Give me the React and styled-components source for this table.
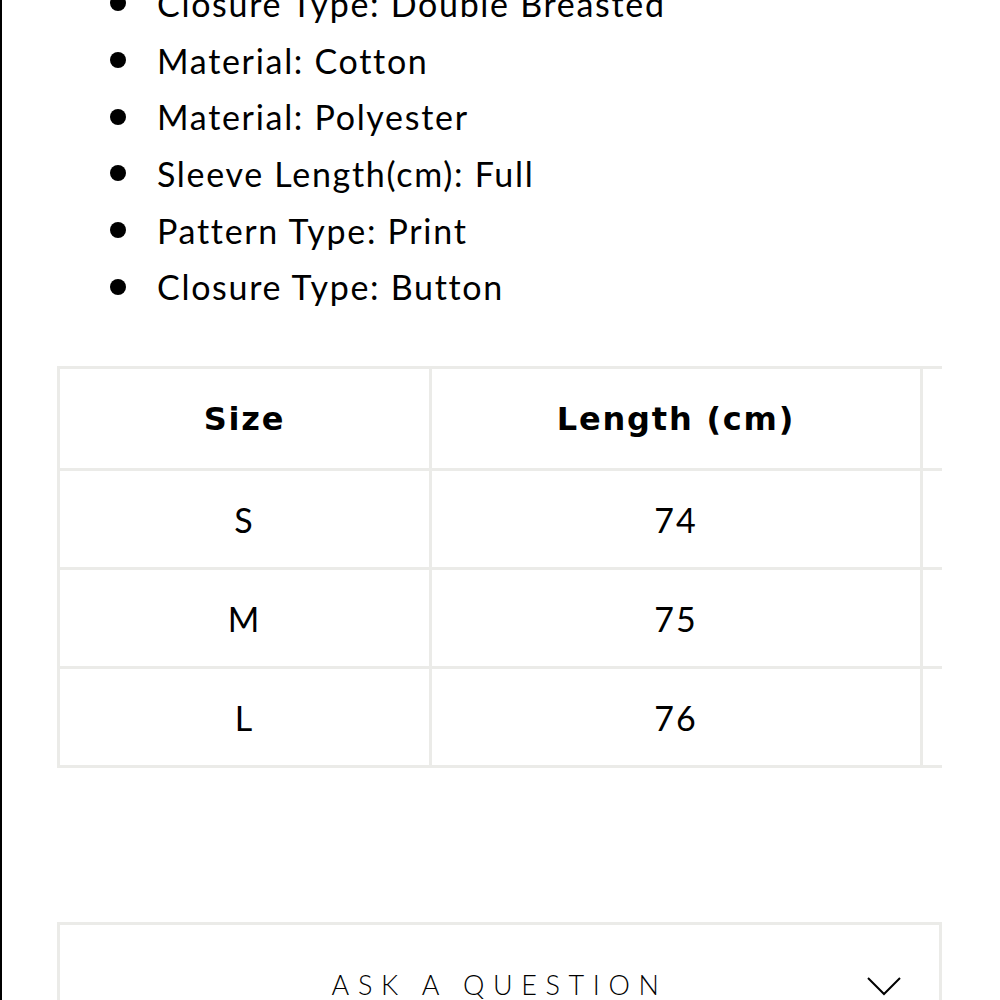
import React from 'react';
import styled, { createGlobalStyle } from 'styled-components';

const GlobalStyle = createGlobalStyle`
  html, body {
    margin: 0;
    padding: 0;
    background: #fff;
    overflow: hidden;
  }
  body {
    font-family: Lato, "Noto Sans", sans-serif;
    color: #000;
  }
`;

const Frame = styled.div`
  margin-top: 5px;
  min-height: 995px;
  border-left: 2px solid #000;
  padding-left: 55px;
  width: 885px;
`;

const Specs = styled.ul`
  list-style: none;
  margin: -30px 0 0;
  padding: 0;
`;

const Spec = styled.li`
  display: flex;
  align-items: center;
  height: 56.7px;
  font-size: 34px;
  letter-spacing: 1.7px;

  &::before {
    content: '';
    width: 16px;
    height: 16px;
    border-radius: 50%;
    background: #000;
    margin: 0 31px 0 53px;
    flex: none;
  }
`;

const TableScroll = styled.div`
  margin-top: 51px;
  overflow: hidden;
  width: 885px;
`;

const SizeTable = styled.table`
  border-collapse: separate;
  border-spacing: 0;
  table-layout: fixed;
  width: 1166px;
  border-top: 3px solid #ebebe8;
  border-left: 3px solid #ebebe8;
`;

const Cell = styled.td`
  box-sizing: border-box;
  width: ${(p) => p.$w}px;
  height: ${(p) => (p.$head ? 102 : 99)}px;
  padding: 0;
  border-right: 3px solid #ebebe8;
  border-bottom: 3px solid #ebebe8;
  text-align: center;
  vertical-align: middle;
  font-size: 34px;
  letter-spacing: 2px;
  font-weight: 400;
`;

const HeadCell = styled(Cell)`
  font-family: "DejaVu Sans", Lato, sans-serif;
  font-size: 32px;
  font-weight: 700;
  letter-spacing: 1.8px;
`;

const AskBox = styled.div`
  margin-top: 154px;
  height: 120px;
  border: 3px solid #ebebe8;
  position: relative;
  display: flex;
  align-items: flex-start;
  justify-content: center;
  padding-top: 43px;
  box-sizing: border-box;
`;

const AskLabel = styled.span`
  font-size: 27px;
  font-weight: 300;
  letter-spacing: 8.6px;
  margin-right: 0;
`;

const Chevron = styled.svg`
  position: absolute;
  right: 38px;
  top: 51px;
`;

const specs = [
  'Closure Type: Double Breasted',
  'Material: Cotton',
  'Material: Polyester',
  'Sleeve Length(cm): Full',
  'Pattern Type: Print',
  'Closure Type: Button',
];

const sizes = [
  ['S', '74'],
  ['M', '75'],
  ['L', '76'],
];

const widths = [372, 491, 300];

export default function App() {
  return (
    <>
      <GlobalStyle />
      <Frame>
        <Specs>
          {specs.map((s, i) => (
            <Spec key={i}>{s}</Spec>
          ))}
        </Specs>
        <TableScroll>
          <SizeTable>
            <thead>
              <tr>
                <HeadCell as="th" $head $w={widths[0]}>Size</HeadCell>
                <HeadCell as="th" $head $w={widths[1]}>Length (cm)</HeadCell>
                <HeadCell as="th" $head $w={widths[2]} />
              </tr>
            </thead>
            <tbody>
              {sizes.map(([s, l]) => (
                <tr key={s}>
                  <Cell $w={widths[0]}>{s}</Cell>
                  <Cell $w={widths[1]}>{l}</Cell>
                  <Cell $w={widths[2]} />
                </tr>
              ))}
            </tbody>
          </SizeTable>
        </TableScroll>
        <AskBox>
          <AskLabel>ASK A QUESTION</AskLabel>
          <Chevron width="34" height="20" viewBox="0 0 34 20">
            <polyline points="1,2 17,18 33,2" fill="none" stroke="#000" strokeWidth="2" />
          </Chevron>
        </AskBox>
      </Frame>
    </>
  );
}
